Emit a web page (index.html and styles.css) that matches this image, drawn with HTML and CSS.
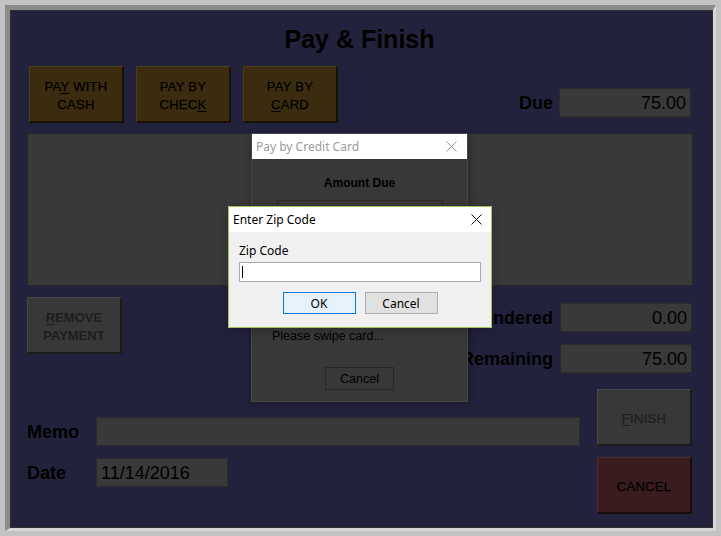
FILE: index.html
```html
<!DOCTYPE html>
<html lang="en">
<head>
  <meta charset="UTF-8" />
  <title>Pay &amp; Finish</title>
  <link rel="stylesheet" href="styles.css">
</head>
<body>

  <div class="frame">
    <div class="window">
      <h1>Pay &amp; Finish</h1>

      <div class="top-row">
        <div class="pay-buttons">
          <button class="btn btn-brown">PA<u>Y</u> WITH<br>CASH</button>
          <button class="btn btn-brown">PAY BY<br>CHEC<u>K</u></button>
          <button class="btn btn-brown">PAY BY<br><u>C</u>ARD</button>
        </div>
        <div class="field-row due">
          <span class="label">Due</span>
          <div class="field num">75.00</div>
        </div>
      </div>

      <div class="payments"></div>

      <div class="mid-row">
        <button class="btn btn-gray btn-bold"><u>R</u>EMOVE<br>PAYMENT</button>
        <div class="totals">
          <div class="field-row">
            <span class="label">Tendered</span>
            <div class="field num">0.00</div>
          </div>
          <div class="field-row">
            <span class="label">Remaining</span>
            <div class="field num">75.00</div>
          </div>
        </div>
      </div>

      <div class="bottom-row">
        <div class="field-row memo">
          <span class="label">Memo</span>
          <div class="field">&nbsp;</div>
        </div>
        <button class="btn btn-gray btn-finish"><u>F</u>INISH</button>
        <div class="field-row date">
          <span class="label">Date</span>
          <div class="field">11/14/2016</div>
        </div>
        <button class="btn btn-red">CANCEL</button>
      </div>
    </div>
  </div>

  <!-- card dialog, behind the zip prompt -->
  <div class="dialog card-dialog">
    <div class="titlebar">
      <span>Pay by Credit Card</span>
      <svg class="close" width="11" height="11" viewBox="0 0 11 11"><path d="M0.5 0.5 L10.5 10.5 M10.5 0.5 L0.5 10.5" stroke="#9a9a9a" stroke-width="1" fill="none"/></svg>
    </div>
    <div class="card-body">
      <div class="amount-label">Amount Due</div>
      <div class="amount-field"></div>
      <div class="swipe">Please swipe card...</div>
      <button class="card-cancel">Cancel</button>
    </div>
  </div>

  <div class="dialog zip-dialog">
    <div class="titlebar">
      <span>Enter Zip Code</span>
      <svg class="close" width="11" height="11" viewBox="0 0 11 11"><path d="M0.5 0.5 L10.5 10.5 M10.5 0.5 L0.5 10.5" stroke="#111" stroke-width="1" fill="none"/></svg>
    </div>
    <div class="zip-body">
      <div class="zip-label">Zip Code</div>
      <div class="zip-input"><span class="caret"></span></div>
      <div class="zip-buttons">
        <button class="win-btn default">OK</button>
        <button class="win-btn">Cancel</button>
      </div>
    </div>
  </div>

</body>
</html>
```

FILE: styles.css
```css
:root {
  --navy: #23223c;
  --field: #393939;
  --text: #000;
}

body {
  margin: 0;
  background: #c3c3c3;
  font-family: "Liberation Sans", Arial, sans-serif;
  color: var(--text);
}

.frame {
  margin: 5px;
  width: 711px;
  height: 526px;
  box-sizing: border-box;
  border-style: solid;
  border-width: 5px 3px 3px 5px;
  border-color: #8a8a8a #d6d6d6 #d6d6d6 #8a8a8a;
}

.window {
  height: 100%;
  box-sizing: border-box;
  border: 1px solid #303030;
  background: var(--navy);
  padding: 13px 20px 0 16px;
}

h1 {
  margin: 0;
  font-size: 25px;
  line-height: 30px;
  text-align: center;
  color: #000;
}

/* buttons */
.btn {
  font-family: "Liberation Sans", Arial, sans-serif;
  font-size: 13px;
  line-height: 18px;
  letter-spacing: 0.3px;
  width: 95px;
  height: 57px;
  padding: 3px 0 0;
  color: var(--text);
  -webkit-text-stroke: 0.25px currentColor;
  border-style: solid;
  border-width: 1px 2px 2px 1px;
}

.btn u {
  text-underline-offset: 2px;
}

.btn-brown {
  background: #3b2b0f;
  border-color: #4e3d1d #181206 #181206 #4e3d1d;
}

.btn-gray {
  background: #383838;
  border-color: #464646 #1b1b1b #1b1b1b #464646;
  color: #1e1e1e;
}

.btn-bold {
  font-weight: bold;
  letter-spacing: 0;
  -webkit-text-stroke: 0;
}

.btn-red {
  background: #3a1c1f;
  border-color: #4b2e31 #170a0b #170a0b #4b2e31;
}

/* label + field rows */
.field-row {
  display: flex;
  align-items: baseline;
  gap: 7px;
}

.label {
  font-size: 18px;
  font-weight: bold;
}

.field {
  height: 29px;
  box-sizing: border-box;
  background: var(--field);
  border: 1px solid #2b2b2b;
  font-size: 18px;
  line-height: 25px;
  padding: 2px 4px 0;
}

.field.num {
  width: 132px;
  text-align: right;
}

.top-row {
  display: flex;
  margin-top: 12px;
  height: 57px;
}

.pay-buttons {
  display: flex;
  gap: 12px;
  padding-left: 2px;
}

.due {
  margin-left: auto;
  margin-top: 22px;
  margin-right: 1px;
  gap: 6px;
}

.payments {
  margin: 10px -1px 0 0;
  height: 153px;
  box-sizing: border-box;
  background: var(--field);
  border: 1px solid #272727;
}

.mid-row {
  display: flex;
  justify-content: space-between;
  margin-top: 11px;
  height: 76px;
}

.totals {
  display: flex;
  flex-direction: column;
  align-items: flex-end;
  gap: 12px;
  margin-top: 6px;
}

.bottom-row {
  display: grid;
  grid-template-columns: 1fr 95px;
  grid-template-rows: 57px 57px;
  column-gap: 17px;
  row-gap: 11px;
  margin-top: 16px;
}

.memo {
  align-self: end;
}

.memo .field {
  flex: 1;
}

.date {
  align-self: start;
  margin-top: 1px;
}

.memo .label,
.date .label {
  width: 62px;
}

.date .field {
  width: 132px;
  padding-left: 4px;
}

/* dialogs */
.dialog {
  position: absolute;
  box-sizing: border-box;
}

.titlebar {
  display: flex;
  align-items: center;
  justify-content: space-between;
  background: #fff;
  font-family: "Noto Sans", "Open Sans", sans-serif;
  font-size: 12px;
}

.close {
  display: block;
}

.card-dialog {
  left: 251px;
  top: 133px;
  width: 217px;
  height: 269px;
  background: #383838;
  border: 1px solid #464646;
  box-shadow: 1px 2px 8px rgba(0, 0, 0, 0.35);
}

.card-dialog .titlebar {
  height: 25px;
  padding: 0 10px 0 4px;
  color: #9b9b9b;
}

.card-body {
  display: flex;
  flex-direction: column;
  align-items: center;
  font-size: 12.5px;
}

.amount-label {
  margin-top: 16px;
  font-size: 12px;
  font-weight: bold;
  line-height: 16px;
}

.amount-field {
  margin-top: 9px;
  width: 166px;
  height: 30px;
  box-sizing: border-box;
  border: 1px solid #282828;
}

.swipe {
  align-self: flex-start;
  margin: 98px 0 0 20px;
  line-height: 16px;
}

.card-cancel {
  margin-top: 23px;
  width: 69px;
  height: 23px;
  padding: 0;
  background: #383838;
  border: 1px solid #272727;
  font-family: "Liberation Sans", Arial, sans-serif;
  font-size: 12.5px;
  color: var(--text);
}

.zip-dialog {
  left: 228px;
  top: 206px;
  width: 264px;
  height: 122px;
  background: #f0f0f0;
  border: 1px solid #a3c45b;
  box-shadow: 0 2px 10px rgba(0, 0, 0, 0.25);
}

.zip-dialog .titlebar {
  height: 25px;
  padding: 0 9px 0 4px;
  color: #000;
}

.zip-body {
  padding: 0 10px;
  font-family: "Noto Sans", "Open Sans", sans-serif;
  font-size: 12px;
  color: #000;
}

.zip-label {
  margin-top: 11px;
  line-height: 16px;
}

.zip-input {
  margin-top: 3px;
  height: 20px;
  box-sizing: border-box;
  background: #fff;
  border: 1px solid #a9a9a9;
  padding: 3px 2px;
}

.caret {
  display: block;
  width: 1px;
  height: 12px;
  background: #000;
}

.zip-buttons {
  display: flex;
  justify-content: center;
  gap: 9px;
  margin-top: 10px;
}

.win-btn {
  width: 73px;
  height: 22px;
  padding: 0;
  background: #e1e1e1;
  border: 1px solid #adadad;
  font-family: "Noto Sans", "Open Sans", sans-serif;
  font-size: 12px;
  color: #000;
}

.win-btn.default {
  background: #e5f1fb;
  border-color: #0078d7;
}
```
